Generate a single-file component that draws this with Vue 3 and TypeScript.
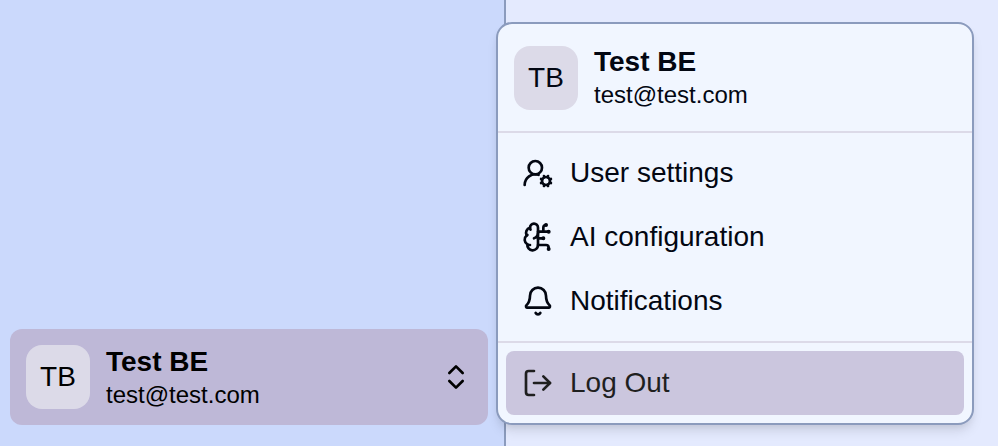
<script setup lang="ts">
interface MenuItem {
  label: string
  paths: string[]
  circles?: [number, number, number][]
}

const user = { initials: 'TB', name: 'Test BE', email: 'test@test.com' }

const items: MenuItem[] = [
  {
    label: 'User settings',
    paths: [
      'M2 21a8 8 0 0 1 10.434-7.62',
      'm14.305 19.53.923-.382',
      'm15.228 16.852-.923-.383',
      'm16.852 15.228-.383-.923',
      'm16.852 20.772-.383.924',
      'm19.148 15.228.383-.923',
      'm19.53 21.696-.382-.924',
      'm20.772 16.852.924-.383',
      'm20.772 19.148.924.383',
    ],
    circles: [[10, 8, 5], [18, 18, 3]],
  },
  {
    label: 'AI configuration',
    paths: [
      'M12 5a3 3 0 1 0-5.997.125 4 4 0 0 0-2.526 5.77 4 4 0 0 0 .556 6.588A4 4 0 1 0 12 18Z',
      'M9 13a4.5 4.5 0 0 0 3-4',
      'M6.003 5.125A3 3 0 0 0 6.401 6.5',
      'M3.477 10.896a4 4 0 0 1 .585-.396',
      'M6 18a4 4 0 0 1-1.967-.516',
      'M12 13h4',
      'M12 18h6a2 2 0 0 1 2 2v1',
      'M12 8h8',
      'M16 8V5a2 2 0 0 1 2-2',
    ],
    circles: [[16, 13, 0.5], [18, 3, 0.5], [20, 21, 0.5], [20, 8, 0.5]],
  },
  {
    label: 'Notifications',
    paths: [
      'M10.268 21a2 2 0 0 0 3.464 0',
      'M3.262 15.326A1 1 0 0 0 4 17h16a1 1 0 0 0 .74-1.673C19.41 13.956 18 12.499 18 8A6 6 0 0 0 6 8c0 4.499-1.411 5.956-2.738 7.326',
    ],
  },
]
</script>

<template>
  <div class="screen">
    <aside class="sidebar">
      <button class="account" type="button">
        <span class="avatar">{{ user.initials }}</span>
        <span class="identity">
          <strong class="name">{{ user.name }}</strong>
          <span class="email">{{ user.email }}</span>
        </span>
        <svg class="icon" viewBox="0 0 24 24">
          <path d="m7 15 5 5 5-5" />
          <path d="m7 9 5-5 5 5" />
        </svg>
      </button>
    </aside>
    <main class="content"></main>

    <div class="menu" role="menu">
      <header class="menu-header">
        <span class="avatar">{{ user.initials }}</span>
        <span class="identity">
          <strong class="name">{{ user.name }}</strong>
          <span class="email">{{ user.email }}</span>
        </span>
      </header>
      <div class="group">
        <div v-for="item in items" :key="item.label" class="item" role="menuitem">
          <svg class="icon" viewBox="0 0 24 24">
            <path v-for="d in item.paths" :key="d" :d="d" />
            <circle v-for="(c, i) in item.circles ?? []" :key="i" :cx="c[0]" :cy="c[1]" :r="c[2]" />
          </svg>
          <span>{{ item.label }}</span>
        </div>
      </div>
      <div class="group">
        <div class="item active" role="menuitem">
          <svg class="icon" viewBox="0 0 24 24">
            <path d="M9 21H5a2 2 0 0 1-2-2V5a2 2 0 0 1 2-2h4" />
            <path d="m16 17 5-5-5-5" />
            <path d="M21 12H9" />
          </svg>
          <span>Log Out</span>
        </div>
      </div>
    </div>
  </div>
</template>

<style>
body {
  margin: 0;
}
</style>

<style scoped>
.screen {
  position: relative;
  display: flex;
  width: 998px;
  height: 446px;
  overflow: hidden;
  font-family: "Liberation Sans", Arial, sans-serif;
  font-size: 28px;
  line-height: 40px;
  color: #030712;
}

.sidebar {
  box-sizing: border-box;
  display: flex;
  flex-direction: column;
  justify-content: flex-end;
  width: 506px;
  padding: 0 16px 21px 10px;
  background: #cbd9fc;
  border-right: 2px solid #8b9bbd;
}

.content {
  flex: 1;
  background: #e4eafe;
}

.account {
  box-sizing: border-box;
  display: flex;
  align-items: center;
  gap: 16px;
  width: 100%;
  height: 96px;
  padding: 16px;
  border: 0;
  border-radius: 12px;
  background: #beb8d7;
  color: #000;
  font: inherit;
  text-align: left;
}

.avatar {
  display: flex;
  flex: none;
  align-items: center;
  justify-content: center;
  width: 64px;
  height: 64px;
  border-radius: 16px;
  background: #dcdae8;
}

.identity {
  display: flex;
  flex: 1;
  flex-direction: column;
}

.menu-header .identity {
  padding-bottom: 2px;
}

.name {
  font-weight: 700;
  line-height: 35px;
}

.email {
  font-size: 24px;
  line-height: 32px;
}

.icon {
  flex: none;
  width: 32px;
  height: 32px;
  fill: none;
  stroke: currentColor;
  stroke-width: 2;
  stroke-linecap: round;
  stroke-linejoin: round;
}

.menu {
  position: absolute;
  top: 22px;
  left: 496px;
  box-sizing: border-box;
  width: 478px;
  height: 403px;
  border: 2px solid #8b9bbd;
  border-radius: 16px;
  background: #f1f6ff;
  box-shadow: 0 8px 12px -2px rgb(0 0 0 / 10%), 0 4px 8px -4px rgb(0 0 0 / 10%);
}

.menu-header {
  display: flex;
  align-items: center;
  gap: 16px;
  height: 64px;
  padding: 22px 16px 21px;
}

.group {
  padding: 8px;
  border-top: 2px solid #dcdae8;
}

.item {
  display: flex;
  align-items: center;
  gap: 16px;
  height: 64px;
  padding: 0 16px;
  border-radius: 8px;
}

.active {
  background: #cbc6de;
  color: #1f1f1f;
}
</style>
